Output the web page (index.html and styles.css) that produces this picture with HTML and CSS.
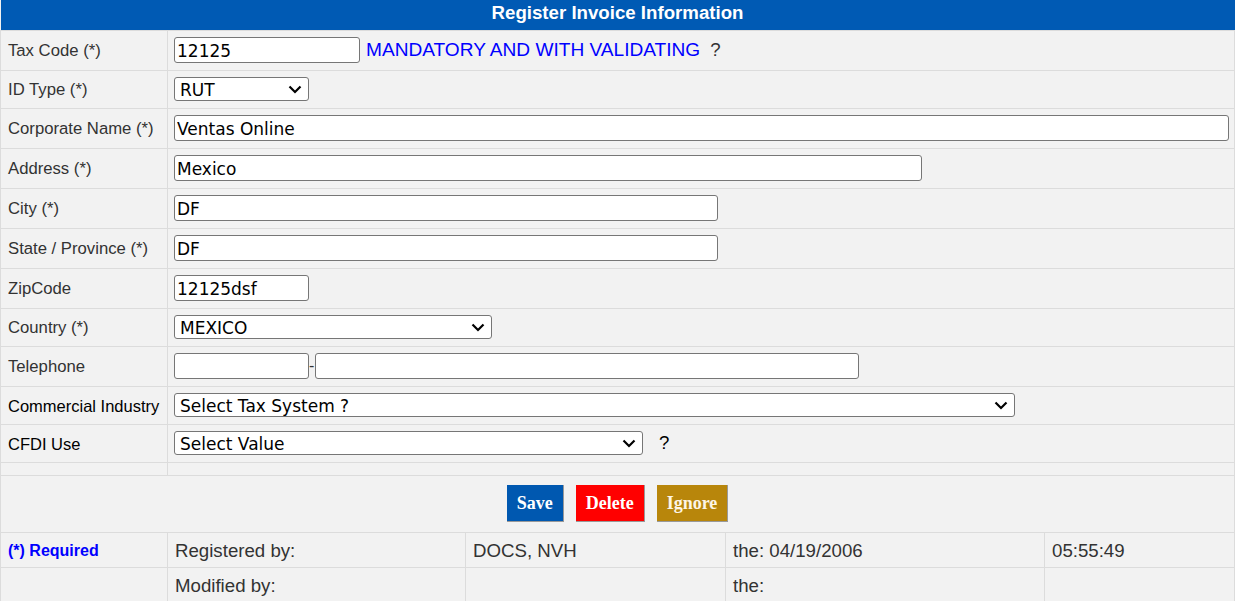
FILE: index.html
```html
<!DOCTYPE html>
<html lang="en">
<head>
    <meta charset="UTF-8">
    <title>Register Invoice Information</title>
    <link rel="stylesheet" href="styles.css">
</head>
<body>
    <table class="form-table">
        <colgroup>
            <col class="col-label">
            <col class="col-reg">
            <col class="col-user">
            <col class="col-date">
            <col>
        </colgroup>
        <tr>
            <th colspan="5" class="title">Register Invoice Information</th>
        </tr>
        <tr>
            <td class="label">Tax Code (*)</td>
            <td colspan="4" class="field">
                <div class="inline">
                    <input type="text" class="w-tax" value="12125">
                    <span class="notice">MANDATORY AND WITH VALIDATING</span>
                    <span class="help">?</span>
                </div>
            </td>
        </tr>
        <tr>
            <td class="label">ID Type (*)</td>
            <td colspan="4" class="field">
                <select class="w-small"><option>RUT</option></select>
            </td>
        </tr>
        <tr>
            <td class="label">Corporate Name (*)</td>
            <td colspan="4" class="field"><input type="text" class="w-full" value="Ventas Online"></td>
        </tr>
        <tr>
            <td class="label">Address (*)</td>
            <td colspan="4" class="field"><input type="text" class="w-address" value="Mexico"></td>
        </tr>
        <tr>
            <td class="label">City (*)</td>
            <td colspan="4" class="field"><input type="text" class="w-city" value="DF"></td>
        </tr>
        <tr>
            <td class="label">State / Province (*)</td>
            <td colspan="4" class="field"><input type="text" class="w-city" value="DF"></td>
        </tr>
        <tr>
            <td class="label">ZipCode</td>
            <td colspan="4" class="field"><input type="text" class="w-small" value="12125dsf"></td>
        </tr>
        <tr>
            <td class="label">Country (*)</td>
            <td colspan="4" class="field">
                <select class="w-country"><option>MEXICO</option></select>
            </td>
        </tr>
        <tr>
            <td class="label">Telephone</td>
            <td colspan="4" class="field">
                <div class="inline phone">
                    <input type="text" class="w-small">
                    <span class="dash">-</span>
                    <input type="text" class="w-city">
                </div>
            </td>
        </tr>
        <tr>
            <td class="label dark">Commercial Industry</td>
            <td colspan="4" class="field">
                <select class="w-industry"><option>Select Tax System ?</option></select>
            </td>
        </tr>
        <tr>
            <td class="label dark">CFDI Use</td>
            <td colspan="4" class="field">
                <div class="inline">
                    <select class="w-cfdi"><option>Select Value</option></select>
                    <span class="help dark">?</span>
                </div>
            </td>
        </tr>
        <tr class="spacer">
            <td></td>
            <td colspan="4"></td>
        </tr>
        <tr>
            <td colspan="5" class="actions">
                <button class="btn btn-save">Save</button>
                <button class="btn btn-delete">Delete</button>
                <button class="btn btn-ignore">Ignore</button>
            </td>
        </tr>
        <tr class="audit">
            <td class="required">(*) Required</td>
            <td>Registered by:</td>
            <td>DOCS, NVH</td>
            <td>the: 04/19/2006</td>
            <td>05:55:49</td>
        </tr>
        <tr class="audit">
            <td></td>
            <td>Modified by:</td>
            <td></td>
            <td>the:</td>
            <td></td>
        </tr>
    </table>
</body>
</html>
```

FILE: styles.css
```css
body {
    margin: 0;
    font-family: 'Liberation Sans', Arial, sans-serif;
    font-size: 16px;
    color: #333;
}
.form-table {
    width: 100%;
    border-collapse: collapse;
    table-layout: fixed;
    background-color: #f2f2f2;
}
.col-label {
    width: 167px;
}
.col-reg {
    width: 298px;
}
.col-user {
    width: 260px;
}
.col-date {
    width: 319px;
}
.form-table td {
    border: 1px solid #dcdcdc;
    padding: 6px 6px 7px;
    vertical-align: middle;
}
.title {
    padding: 0 0 5px;
    line-height: 25px;
    background-color: #005ab4;
    color: white;
    font-size: 14pt;
    font-weight: bold;
    text-align: center;
}
.form-table .label {
    padding: 7px 4px 6px 7px;
    font-size: 16.7px;
    white-space: nowrap;
}
.form-table .label.dark {
    font-size: 16.5px;
}
.dark {
    color: #000;
}
.inline {
    display: flex;
    align-items: center;
}
input, select {
    box-sizing: border-box;
    font-family: 'DejaVu Sans', Verdana, sans-serif;
    font-size: 17px;
    color: #000;
    background-color: white;
    border: 1px solid #767676;
    border-radius: 3px;
    margin: 0;
    vertical-align: middle;
}
input {
    height: 26px;
    padding: 2px 2px 0;
}
select {
    appearance: none;
    height: 24px;
    padding: 2px 24px 0 5px;
    background-image: url("data:image/svg+xml,%3Csvg xmlns='http://www.w3.org/2000/svg' width='14' height='9' viewBox='0 0 14 9'%3E%3Cpath d='M1.5 1.5 L7 7 L12.5 1.5' fill='none' stroke='%23000' stroke-width='2.2'/%3E%3C/svg%3E");
    background-repeat: no-repeat;
    background-position: right 6px center;
}
.w-tax {
    width: 186px;
}
.w-small {
    width: 135px;
}
.w-full {
    width: 1055px;
}
.w-address {
    width: 748px;
}
.w-city {
    width: 544px;
}
.w-country {
    width: 318px;
}
.w-industry {
    width: 841px;
}
.w-cfdi {
    width: 469px;
}
.notice {
    margin-left: 6px;
    color: #0000ff;
    font-size: 19.1px;
}
.help {
    margin-left: 10px;
    font-size: 14pt;
}
.w-cfdi + .help {
    margin-left: 16px;
}
.dash {
    width: 6px;
}
.spacer td {
    height: 12px;
    padding: 0;
}
.actions {
    text-align: center;
    padding: 9px 0 10px !important;
    font-size: 0;
}
.btn {
    height: 37px;
    margin: 0 6px;
    padding: 0 10px;
    border: none;
    border-right: 1px solid #999;
    border-bottom: 1px solid #999;
    color: white;
    font-family: 'Liberation Serif', 'Times New Roman', serif;
    font-size: 18px;
    font-weight: bold;
    cursor: pointer;
}
.btn-save {
    background-color: #0058b0;
}
.btn-delete {
    background-color: #ff0000;
}
.btn-ignore {
    background-color: #b8860b;
    color: #fdf5e6;
}
.audit td {
    font-size: 14pt;
    line-height: 21px;
    padding: 7px 6px 6px 7px;
}
.audit .required {
    color: #0000ff;
    font-size: 16px;
    font-weight: bold;
}
```
